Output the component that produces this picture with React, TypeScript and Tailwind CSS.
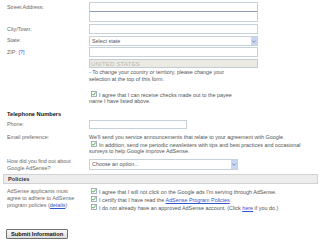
import React from "react";

const Check = () => (
  <svg width="6" height="6" viewBox="0 0 6 6" className="inline-block shrink-0 align-[-0.5px] mr-[2px]">
    <rect x="0.5" y="0.5" width="5" height="5" fill="#fff" stroke="#8d9caa" strokeWidth="0.8" />
    <path d="M1.4 3 L2.5 4.2 L4.6 1.5" fill="none" stroke="#2f9a2f" strokeWidth="0.9" />
  </svg>
);

const Arrow = ({ className }: { className: string }) => (
  <div className={`flex items-center justify-center bg-[#c7d7f2] ${className}`}>
    <svg width="4" height="3" viewBox="0 0 4 3">
      <path d="M0.5 0.6 L2 2.3 L3.5 0.6" fill="none" stroke="#6d7f9e" strokeWidth="0.8" />
    </svg>
  </div>
);

const App = () => {
  return (
    <div className="w-[320px] h-[246px] overflow-hidden bg-white font-['Liberation_Sans',Arial,sans-serif] text-[5.4px] leading-[7px] text-[#6a6a6a]">
      {/* Address */}
      <div className="flex pt-[2px]">
        <div className="w-[89px] pl-[7px] pt-[1.5px]">Street Address:</div>
        <div className="flex flex-col">
          <div className="w-[169px] h-[10px] border border-[#c7d1da] border-b-[#8a9db5]" />
          <div className="w-[169px] h-[10px] border border-t-0 border-[#c7d1da]" />
        </div>
      </div>
      <div className="flex mt-[2px]">
        <div className="w-[89px] pl-[7px] pt-[1.5px]">City/Town:</div>
        <div className="w-[169px] h-[10px] border border-[#c7d1da]" />
      </div>
      <div className="flex mt-[2px]">
        <div className="w-[89px] pl-[7px] pt-[1px]">State:</div>
        <div className="w-[169px] h-[10px] border border-[#c7d1da] border-b-dotted flex items-center justify-between">
          <span className="pl-[2px] text-[#555]">Select state</span>
          <Arrow className="w-[6px] h-[8px] mr-[0.5px]" />
        </div>
      </div>
      <div className="flex mt-[1px]">
        <div className="w-[89px] pl-[7px] pt-[1.5px]">
          ZIP: <span className="text-[#3355cc]">[?]</span>
        </div>
        <div className="w-[169px] h-[10px] border border-[#c7d1da] border-b-dotted" />
      </div>
      <div className="flex mt-[2px]">
        <div className="w-[89px]" />
        <div className="flex flex-col">
          <div className="w-[169px] h-[9px] border border-[#c2cad2] bg-[#ebebe3] pl-[1px] text-[6px] leading-[8px] tracking-[0.2px] text-[#b8b8b4]">
            UNITED STATES
          </div>
          <div className="mt-[1px] text-[#555]">
            - To change your country or territory, please change your
            <br />
            selection at the top of this form.
          </div>
          <div className="mt-[7.5px] text-[#555]">
            <div className="pl-[2px]">
              <Check />I agree that I can receive checks made out to the payee
            </div>
            <div>name I have listed above.</div>
          </div>
        </div>
      </div>

      {/* Telephone */}
      <div className="mt-[5.5px] pl-[7px] font-bold text-[5.7px] text-[#111]">Telephone Numbers</div>
      <div className="flex mt-[2.5px]">
        <div className="w-[89px] pl-[7px] pt-[1px]">Phone:</div>
        <div className="w-[98px] h-[9px] border border-[#c7d1da] border-t-dotted" />
      </div>
      <div className="flex mt-[4.5px]">
        <div className="w-[89px] pl-[7px]">Email preference:</div>
        <div className="text-[#555]">
          <div>We'll send you service announcements that relate to your agreement with Google.</div>
          <div className="pl-[2px]">
            <Check />In addition, send me periodic newsletters with tips and best practices and occasional
          </div>
          <div>surveys to help Google improve AdSense.</div>
        </div>
      </div>
      <div className="flex mt-[3px]">
        <div className="w-[89px] pl-[7px]">
          How did you find out about
          <br />
          Google AdSense?
        </div>
        <div className="w-[149px] h-[11px] mt-[0.5px] border border-[#c7d1da] flex items-center justify-between">
          <span className="pl-[2px] text-[#555]">Choose an option...</span>
          <Arrow className="w-[6px] h-[9px] mr-[0.5px]" />
        </div>
      </div>

      {/* Policies */}
      <div className="mt-[2px] ml-[3px] mr-[2px] h-[10px] border border-[#d2d2d2] bg-[#ededed] pl-[4px] font-bold text-[5.7px] leading-[8px] text-[#333]">
        Policies
      </div>
      <div className="flex mt-[4px]">
        <div className="w-[89px] pl-[7px]">
          AdSense applicants must
          <br />
          agree to adhere to AdSense
          <br />
          program policies (<span className="text-[#3355cc] underline">details</span>)
        </div>
        <div className="flex flex-col pl-[2px] text-[#555]">
          <div className="h-[8px]">
            <Check />I agree that I will not click on the Google ads I'm serving through AdSense.
          </div>
          <div className="h-[8px]">
            <Check />I certify that I have read the{" "}
            <span className="text-[#3355cc] underline">AdSense Program Policies</span>.
          </div>
          <div className="h-[8px]">
            <Check />I do not already have an approved AdSense account. (Click{" "}
            <span className="text-[#3355cc] underline">here</span> if you do.)
          </div>
        </div>
      </div>

      <div className="mt-[17px] pl-[6px]">
        <button className="h-[10px] px-[4px] border border-[#707070] rounded-[1px] bg-gradient-to-b from-[#fafafa] to-[#dcdcdc] font-bold text-[5.7px] leading-[8px] text-[#111]">
          Submit Information
        </button>
      </div>
    </div>
  );
};

export default App;
